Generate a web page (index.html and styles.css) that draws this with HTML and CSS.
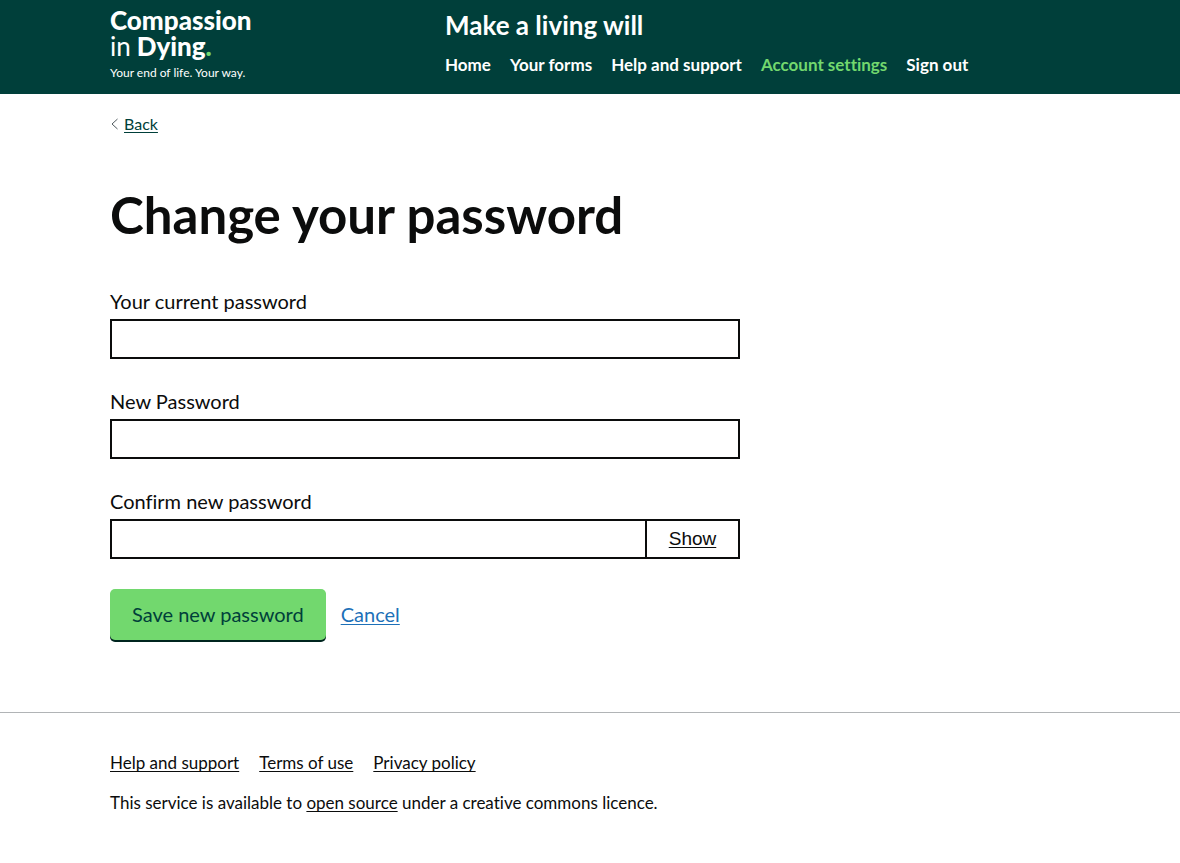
FILE: index.html
```html
<!DOCTYPE html>
<html lang="en">
<head>
<meta charset="utf-8">
<meta name="viewport" content="width=device-width, initial-scale=1">
<title>Change your password</title>
<link rel="stylesheet" href="styles.css">
</head>
<body>
<header class="header">
  <div class="container header-inner">
    <a class="logo" href="#">
      <span class="logo-line logo-strong">Compassion</span>
      <span class="logo-line"><span class="logo-in">in</span><span class="logo-strong">Dying</span><span class="logo-strong logo-dot">.</span></span>
      <span class="logo-tagline">Your end of life. Your way.</span>
    </a>
    <div class="header-content">
      <a class="service-name" href="#">Make a living will</a>
      <nav class="nav" aria-label="Menu">
        <a href="#">Home</a>
        <a href="#">Your forms</a>
        <a href="#">Help and support</a>
        <a class="active" href="#" aria-current="page">Account settings</a>
        <a href="#">Sign out</a>
      </nav>
    </div>
  </div>
</header>
<div class="container">
  <div class="back">
    <svg class="chevron" viewBox="0 0 9 12" aria-hidden="true"><path d="M7.500 1 2 6l5.500 5"/></svg>
    <a href="#">Back</a>
  </div>
  <main class="main">
    <h1>Change your password</h1>
    <form class="form">
      <div class="field">
        <label for="current">Your current password</label>
        <input id="current" type="password">
      </div>
      <div class="field">
        <label for="new">New Password</label>
        <input id="new" type="password">
      </div>
      <div class="field">
        <label for="confirm">Confirm new password</label>
        <div class="input-group">
          <input id="confirm" type="password">
          <button class="show" type="button">Show</button>
        </div>
      </div>
      <div class="actions">
        <button class="save" type="submit">Save new password</button>
        <a class="cancel" href="#">Cancel</a>
      </div>
    </form>
  </main>
</div>
<footer class="footer">
  <div class="container">
    <nav class="footer-links" aria-label="Footer">
      <a href="#">Help and support</a>
      <a href="#">Terms of use</a>
      <a href="#">Privacy policy</a>
    </nav>
    <p>This service is available to <a href="#">open source</a> under a creative commons licence.</p>
  </div>
</footer>
</body>
</html>
```

FILE: styles.css
```css
* { box-sizing: border-box; }

body {
  margin: 0;
  background: #fff;
  color: #0b0c0c;
  font-family: Lato, "Open Sans", sans-serif;
  font-size: 17px;
  font-variant-ligatures: none;
  line-height: 20px;
}

a {
  color: inherit;
  text-underline-offset: 2px;
  text-decoration-thickness: 1px;
  text-decoration-skip-ink: none;
}

.container {
  max-width: 960px;
  margin: 0 auto;
}

.header {
  background: #003f3a;
  color: #fff;
  padding: 7px 0;
}

.header-inner {
  display: grid;
  grid-template-columns: 335px 1fr;
}

.header a { text-decoration: none; }

.logo {
  display: flex;
  flex-direction: column;
}

.logo-line {
  display: flex;
  font-size: 26px;
  line-height: 26px;
}

.logo-in { margin-right: 6px; }
.logo-strong { font-weight: 900; }
.logo-dot { color: #72d86e; }

.logo-tagline {
  font-size: 12px;
  line-height: 28px;
}

.service-name {
  display: block;
  font-size: 26px;
  font-weight: 700;
  line-height: 36px;
}

.nav {
  display: flex;
  flex-wrap: wrap;
  gap: 19px;
  margin-top: 12px;
  font-weight: 700;
}

.nav .active { color: #72d86e; }

.back {
  display: flex;
  align-items: center;
  gap: 5px;
  padding: 20px 0;
  color: #003f3a;
  font-size: 16px;
}

.chevron {
  width: 9px;
  height: 12px;
  fill: none;
  stroke: #505a5f;
}

.main { padding: 31px 0 72px; }

h1 {
  margin: 0 0 44px;
  font-size: 51px;
  font-weight: 700;
  line-height: 60px;
}

.form { max-width: 630px; }

.field {
  margin-bottom: 30px;
  font-size: 20px;
  line-height: 24px;
}

.field label {
  display: block;
  margin-bottom: 6px;
}

.field input {
  display: block;
  width: 100%;
  height: 40px;
  padding: 5px;
  border: 2px solid #0b0c0c;
  border-radius: 0;
  font: inherit;
}

.input-group { display: flex; }

.input-group input {
  flex: 1;
  min-width: 0;
  border-right: 0;
}

.show {
  width: 95px;
  border: 2px solid #0b0c0c;
  background: #fff;
  color: #0b0c0c;
  font: 19px/24px "Liberation Sans", Arial, sans-serif;
  text-decoration: underline;
  text-underline-offset: 2px;
  cursor: pointer;
}

.actions {
  display: flex;
  align-items: baseline;
  gap: 15px;
  font-size: 20px;
}

.save {
  padding: 13px 22px;
  border: 0;
  border-radius: 5px;
  background: #72d86e;
  box-shadow: 0 2px 0 #00251f;
  color: #003f3a;
  font: inherit;
  line-height: 25px;
  cursor: pointer;
}

.cancel { color: #1d70b8; }

.footer {
  border-top: 1px solid #b1b4b6;
  padding: 40px 0;
}

.footer-links {
  display: flex;
  flex-wrap: wrap;
  gap: 20px;
}

.footer p { margin: 20px 0 0; }
```
